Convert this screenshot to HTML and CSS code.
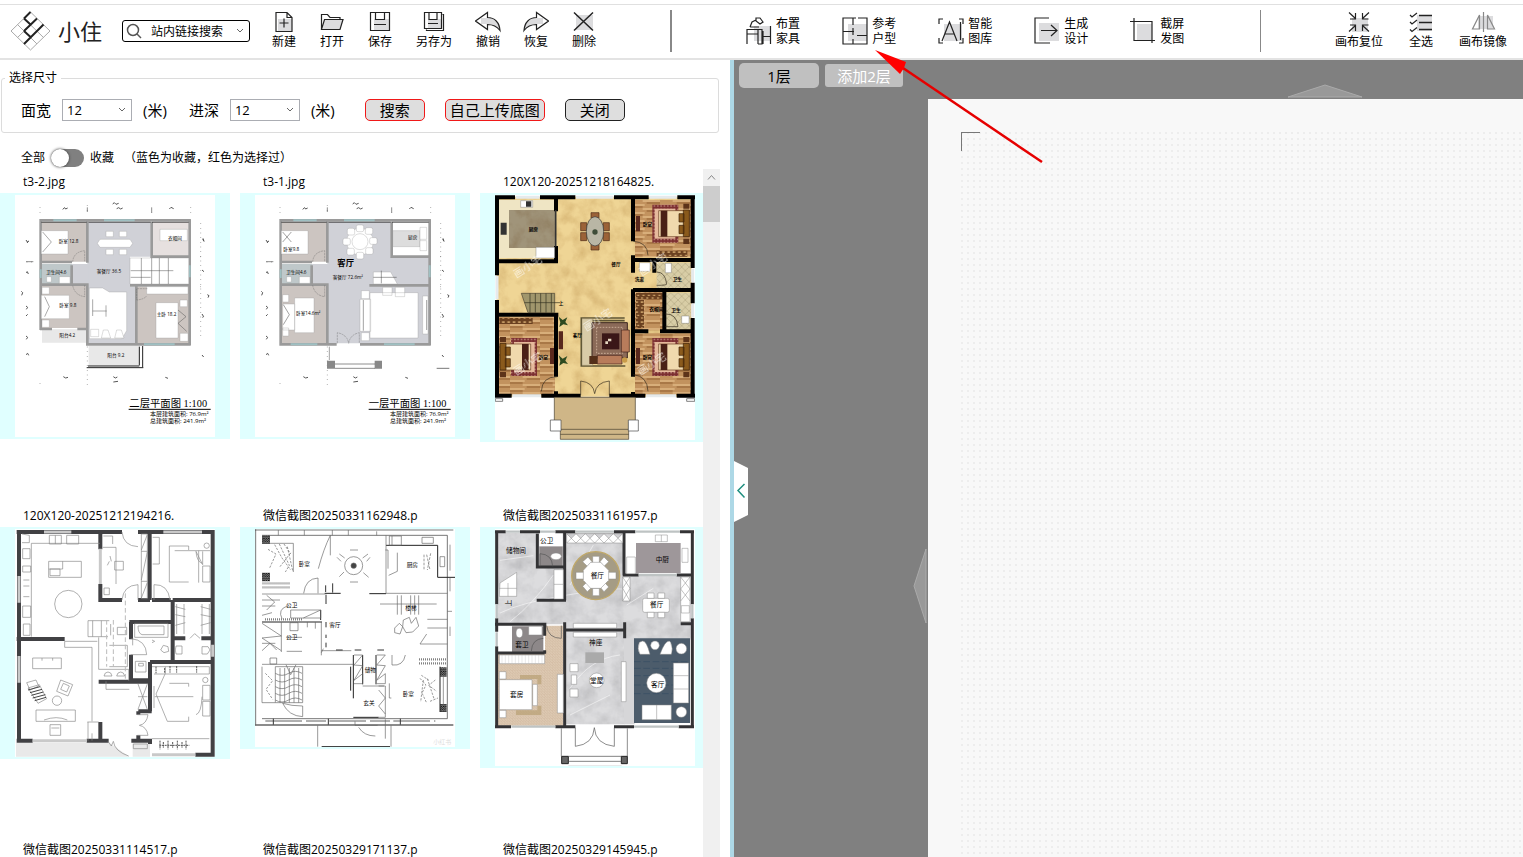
FILE: index.html
```
<!DOCTYPE html>
<html lang="zh-CN">
<head>
  <meta charset="UTF-8" />
  <meta name="viewport" content="width=device-width, initial-scale=1.0"/>
  <title>小住</title>
  <link rel="stylesheet" href="styles.css">
</head>
<body>
  <header class="topbar">
    <div class="logo">
      <svg class="logo-mark" viewBox="0 0 41 40">
        <g fill="none" stroke="#aaa" stroke-width="1">
          <path d="M20.500 1L40 20L20.500 39L1 20ZM14 7.500L33.500 26.500M7.500 13.500L27 33M27 7.500L7.500 26.500M33.500 13.500L14 33"/>
        </g>
        <path d="M14 7.500L20.500 1M14 7.500L20.500 13.500M27 7.500L14 20M14 20L20.500 26M33.500 13.500L14 33" fill="none" stroke="#222" stroke-width="2"/>
      </svg>
      <span class="logo-name">小住</span>
    </div>

    <div class="search">
      <svg class="search-icon" viewBox="0 0 16 16"><circle cx="7" cy="7" r="5.500"/><path d="M11 11l4 4"/></svg>
      <select class="search-select" aria-label="站内链接搜索">
        <option>站内链接搜索</option>
      </select>
    </div>

    <nav class="tools">
      <button class="tool">
        <svg viewBox="0 0 26 22"><path class="shade" d="M7 8h14v12H7z"/><path d="M5 1.500h11l5 5v14H5zM16 1.500v5h5M8.500 12h9M13 7.500v9"/></svg>
        <span>新建</span>
      </button>
      <button class="tool">
        <svg viewBox="0 0 26 22"><path class="shade" d="M5 8h19l-3 10H4z"/><path d="M2.500 18.500v-15h6l2.500 3h10v2M2.500 18.500l3-10h18.500l-3 10z"/></svg>
        <span>打开</span>
      </button>
      <button class="tool">
        <svg viewBox="0 0 26 22"><path class="shade" d="M7 8h15v11H7z"/><path d="M3.500 1.500h19v18h-19zM8.500 1.500v7h9v-7M7 13.500h12"/></svg>
        <span>保存</span>
      </button>
      <button class="tool">
        <svg viewBox="0 0 26 22"><path class="shade" d="M7 8h13v10H7z"/><path d="M3.500 1.500h17v16h-17zM8 1.500v7h8v-7M7 12.500h10M21.500 3.500h1v16h-17v-1"/></svg>
        <span>另存为</span>
      </button>
      <button class="tool">
        <svg viewBox="0 0 26 22"><path class="shade" d="M6 7h10l8 6v5l-8-5H6z"/><path d="M.5 10l12-8.500v5c7 0 12 5 12.500 13c-3-4-6-6-12.500-6v5z"/></svg>
        <span>撤销</span>
      </button>
      <button class="tool">
        <svg viewBox="0 0 26 22"><path class="shade" d="M20 7H10l-8 6v5l8-5h10z"/><path d="M25.500 10l-12-8.500v5c-7 0-12 5-12.500 13c3-4 6-6 12.500-6v5z"/></svg>
        <span>恢复</span>
      </button>
      <button class="tool">
        <svg viewBox="0 0 26 22"><path class="shade" d="M5 4h17v15H5z"/><path d="M3 1.500l19 18M22 1.500l-19 18" stroke-width="1.500"/></svg>
        <span>删除</span>
      </button>
    </nav>

    <div class="divider"></div>

    <nav class="features">
      <button class="feature">
        <svg viewBox="0 0 26 28"><path class="shade" d="M8 9h17v15H8z"/><path d="M1 27V12.500h11V27M1 17h11M12 12.500h4V27h-4M17 19.500h7M17 14v13M24.500 9v18M4 10L6 5l4-2M4 10h9M10 1h4l3 4-3 2-4-3z"/></svg>
        <span>布置<br>家具</span>
      </button>
      <button class="feature">
        <svg viewBox="0 0 26 28"><path class="shade" d="M6 7h19v17H6z"/><path d="M16 1h9v26H1V1h13M11 1v7M11 11v7M1 14.500h11M15 18.500h10M11 22v5"/></svg>
        <span>参考<br>户型</span>
      </button>
      <button class="feature">
        <svg viewBox="0 0 26 28"><path class="shade" d="M6 7h18v17H6z"/><path d="M5 2H1v5M21 2h4v5M1 21v5h4M25 21v5h-4M4 24L11.500 5L19 24M7 17h9M22.500 5v18"/></svg>
        <span>智能<br>图库</span>
      </button>
      <button class="feature">
        <svg viewBox="0 0 26 28"><path class="shade" d="M5 6h20v18H5z"/><path d="M15 1H1v25h15M7 13.500h16M17 8l6 5.500l-6 5.500"/></svg>
        <span>生成<br>设计</span>
      </button>
      <button class="feature">
        <svg viewBox="0 0 26 28"><path class="shade" d="M7 7h15v16H7z"/><path d="M0 4.500h22V26M4 1v22.500h21"/></svg>
        <span>截屏<br>发图</span>
      </button>
    </nav>

    <div class="divider thin"></div>

    <nav class="tools view-tools">
      <button class="tool">
        <svg viewBox="0 0 26 22"><path class="shade" d="M6 7h16v14H6z"/><path d="M3 1.500l6.500 6M9.500 2v6H4M23 1.500l-6.500 6M16.500 2v6h6M3 20.500l6.500-6M9.500 20v-6H4M23 20.500l-6.500-6M16.500 20v-6h6"/></svg>
        <span>画布复位</span>
      </button>
      <button class="tool">
        <svg viewBox="0 0 26 22"><path class="shade" d="M9 4h15v16H9z"/><path d="M2 4l2 2 5-4M2 11l2 2 5-4M2 18.500l2 2 5-4"/><path d="M11 4.500h13M11 11.500h13M11 18.500h13" stroke-width="1.500"/></svg>
        <span>全选</span>
      </button>
      <button class="tool muted">
        <svg viewBox="0 0 26 22"><path class="shade" d="M8 5h15v13H8z"/><path d="M9.500 4v14h-7zM17.500 4l7 14h-7zM13.500 1v20"/></svg>
        <span>画布镜像</span>
      </button>
    </nav>
  </header>

  <main class="layout">
    <section class="panel">
      <fieldset class="size-box">
        <legend>选择尺寸</legend>
        <div class="size-item">
          <label for="planWidth">面宽</label>
          <select id="planWidth"><option>12</option></select>
          <span>(米)</span>
        </div>
        <div class="size-item">
          <label for="planDepth">进深</label>
          <select id="planDepth"><option>12</option></select>
          <span>(米)</span>
        </div>
        <div class="size-actions">
          <button class="btn btn-red">搜索</button>
          <button class="btn btn-red btn-wide">自己上传底图</button>
          <button class="btn">关闭</button>
        </div>
      </fieldset>

      <div class="switch-row">
        <span>全部</span>
        <input type="checkbox" class="switch" id="favOnly">
        <label for="favOnly">收藏</label>
        <span class="switch-tip">（蓝色为收藏，红色为选择过）</span>
      </div>

      <div class="gallery-wrap">
        <div class="gallery">
          <!-- shared patterns and furniture -->
          <svg class="defs" aria-hidden="true">
            <defs>
              <pattern id="wood" width="90" height="24" patternUnits="userSpaceOnUse">
                <path fill="#c2925e" d="M0 0h90v24H0z"/>
                <path fill="#a97847" d="M0 0h38v6H0zM50 12h40v6H50z"/>
                <path fill="#d8ae7a" d="M38 6h52v6H38zM0 18h44v6H0z"/>
              </pattern>
              <pattern id="parquet" width="8" height="8" patternUnits="userSpaceOnUse">
                <path fill="#ddc9b2" d="M0 0h8v8H0z"/><path d="M0 0l8 8M0 8l4-4" stroke="#c6ad92"/>
              </pattern>
              <pattern id="tile" width="22" height="22" patternUnits="userSpaceOnUse">
                <path fill="#d8cda6" d="M0 0h22v22H0z"/><path d="M0 0l22 22M22 0L0 22" stroke="#8f8460" fill="none"/>
              </pattern>
              <pattern id="rug" width="10" height="10" patternUnits="userSpaceOnUse">
                <path fill="#7b2d2f" d="M0 0h10v10H0z"/><path d="M2 2h5v4H2z" fill="#c08d80"/>
              </pattern>
              <pattern id="closet" width="16" height="30" patternUnits="userSpaceOnUse">
                <path fill="#6a4020" d="M0 0h16v30H0z"/><path d="M2 4h8v5H2zM7 14h7v4H7zM3 22h6v4H3z" fill="#c49a64"/>
              </pattern>
              <pattern id="speck" width="7" height="7" patternUnits="userSpaceOnUse">
                <path fill="#777" d="M0 0h7v7H0z"/><path d="M0 3h4M4 6h3" stroke="#111" stroke-width="3"/>
              </pattern>
              <filter id="stone" x="0" y="0" width="1" height="1">
                <feTurbulence type="fractalNoise" baseFrequency=".025" numOctaves="4" seed="8"/>
                <feColorMatrix values="0 0 0 0 .65  0 0 0 0 .5  0 0 0 0 .3  .7 .7 0 0 -.55"/>
                <feComposite in2="SourceGraphic" operator="in"/>
                <feBlend in2="SourceGraphic" mode="multiply"/>
              </filter>
              <filter id="marble" x="0" y="0" width="1" height="1">
                <feTurbulence type="fractalNoise" baseFrequency=".02" numOctaves="4" seed="3"/>
                <feColorMatrix values="0 0 0 0 .6  0 0 0 0 .6  0 0 0 0 .61  .9 .9 0 0 -.7"/>
                <feComposite in2="SourceGraphic" operator="in"/>
                <feBlend in2="SourceGraphic" mode="multiply"/>
              </filter>
              <g id="luxBed">
                <path fill="url(#rug)" d="M33 0h78v114H33z"/>
                <path fill="#e6b99c" d="M42 12h62v90H42z"/>
                <path fill="#f0d9ad" stroke="#6a3f22" stroke-width="2" d="M0 18h92v78H0z"/>
                <path fill="#4a2016" d="M66 18h20v78H66z"/>
                <path fill="#8a5a1c" stroke="#3b2008" stroke-width="2" d="M0 16h18v80H0zM16 27h15v25H16zM16 62h15v25H16z"/>
                <path fill="#5d3319" d="M0-3h18v15H0zM0 102h18v16H0z"/>
              </g>
              <g id="dims" fill="none" stroke="#555" stroke-width="2">
                <path d="M120 52v20M262 46v22M455 52v20M572 52v20M602 100v350M80 216h20M600 200h12M600 290h12M120 580v14M262 470v120" stroke-dasharray="2 12"/>
                <path d="M78 215h22M262 52v14M455 54v14"/>
                <path d="M188 58l6-5l3 4l6-3M338 42l5-4l5 5l8-3M350 56l6-3l6 4l6-3M508 57l5-5l8 4M78 150l4 6l4-3l-5 6M78 248l4-3l3 7M64 304l4 4l-3 8M78 348l5 4l-4 6M78 378l5-5M608 148l4 6l-3-9M606 240l6 5M622 314l5 3l-3 6M606 372l5 8l-4 2M606 495l5 6M190 560l7 4l7-2M340 560l6 4l6-3M340 576l14-2M496 562l8 3M78 438l5 4l-4 6M78 494l5-4l3 6" stroke-width="3"/>
              </g>
              <g id="planTitle">
                <path d="M386 658h246" stroke="#000" stroke-width="3"/>
                <text x="450" y="679" font-size="18">本层建筑面积: 76.9m²</text>
                <text x="450" y="698" font-size="18">总建筑面积: 241.9m²</text>
              </g>
              <g id="chair"><rect x="-11" y="-11" width="22" height="20" rx="5"/></g>
            </defs>
          </svg>

          <article class="card">
            <h3>t3-2.jpg</h3>
            <div class="thumb">
              <svg class="plan" viewBox="45 15 600 726">
                <path fill="#fff" d="M45 15h600v726H45z"/>
                <use href="#dims"/>
                <path fill="#d0d1d7" d="M262 95h190v105h-62v90h18v170H262z"/>
                <path fill="#d0d1d7" d="M215 222h50v64h-50z"/>
                <path fill="#ccc5c1" d="M122 95h138v120H122zM122 288h138v126H122zM410 290h158v170H410z"/>
                <path fill="#e6e0df" d="M456 96h110v102H456z"/>
                <path fill="#bfc8ca" d="M124 222h92v62h-92z"/>
                <path fill="#e8e8e8" d="M126 418h132v40H126zM266 468h154v60H266z"/>
                <path d="M118 91h454M122 88v332M122 216h94M122 284h144M262 92v126M262 282v184M258 463h314M569 88v378M390 286h180M455 96v104h114M409 290v172M120 417h36M232 417h28M215 226v58" fill="none" stroke="#9a9a9a" stroke-width="8"/>
                <path d="M124 97h136M266 97h186M456 97h110" stroke="#222" stroke-width="2"/>
                <path d="M160 91h70M312 91h92M432 463h92M122 238v26M569 226v36" stroke="#9fc0c2" stroke-width="6"/>
                <g fill="#fff" stroke="#999" stroke-width="1">
                  <path d="M124 122h80v70h-80zM124 316h84v70h-84zM468 338h66v106h-66zM390 204h176v78H390zM440 290h124v22H440zM178 260h32v20h-32zM268 294h40l20 12h52v116l-14 24h-98z"/>
                  <path d="M300 148h90l8 12l-8 12h-90l-8-12zM318 124h22v16h-22zM358 124h22v16h-22zM318 178h22v16h-22zM358 178h22v16h-22zM126 292h22v20h-22zM126 390h22v22h-22zM540 430h24v24h-24zM540 330h22v20h-22zM480 118h82v34h-82z"/>
                  <path d="M272 418h24v22h-24zM304 444l6-24h14l8 24zM344 444l6-24h14l8 24zM140 260h14v16h-14z"/>
                </g>
                <path d="M424 204v78M455 204v78M478 204v78M505 204v78M392 242h128M392 262h60M278 328v50M278 363h42M318 346v34M128 126l26 30l-26 30M134 320l14 30l-14 30M534 360l24 20l-24 20l26 24" fill="none" stroke="#555" stroke-width="1.500"/>
                <path d="M254 214v-32q-34 4-36 34M254 286v34q-30-4-36-34M442 296h-32v34q22-2 30-12" fill="none" stroke="#555" stroke-dasharray="6 2"/>
                <path d="M264 528h154M428 468v64M418 470v56M260 533h170" fill="none" stroke="#222" stroke-width="3"/>
                <g font-size="14"><text x="176" y="160">卧室 12.8</text><text x="290" y="250">客餐厅 36.5</text><text x="138" y="252">卫生间4.6</text><text x="178" y="352">卧室 9.8</text><text x="470" y="378">主卧 18.2</text><text x="178" y="440">阳台4.2</text><text x="322" y="500">阳台 9.2</text><text x="504" y="150">衣帽间</text></g>
                <text x="388" y="651" font-size="31" class="serif">二层平面图 1:100</text>
                <use href="#planTitle"/>
              </svg>
            </div>
          </article>

          <article class="card">
            <h3>t3-1.jpg</h3>
            <div class="thumb">
              <svg class="plan" viewBox="45 15 600 726">
                <path fill="#fff" d="M45 15h600v726H45z"/>
                <use href="#dims"/>
                <path fill="#d0d1d7" d="M262 95h190v105h116v260H262zM215 222h50v64h-50z"/>
                <path fill="#ccc5c1" d="M122 95h138v120H122zM122 288h138v172H122z"/>
                <path fill="#bfc8ca" d="M124 222h92v62h-92z"/>
                <path fill="#fff" d="M458 98h108v98H458z"/>
                <path fill="#ddd" stroke="#999" d="M458 122h82v48h-82z"/>
                <path d="M118 91h454M122 88v378M122 216h94M122 284h144M262 92v126M262 282v184M118 463h172M360 463h212M569 88v378M388 286h182M455 96v104h114M215 226v58" fill="none" stroke="#9a9a9a" stroke-width="8"/>
                <path d="M124 97h136M266 97h186M456 97h110" stroke="#222" stroke-width="2"/>
                <path d="M160 91h70M312 91h92M432 463h92M152 463h80M122 238v26M569 226v36" stroke="#9fc0c2" stroke-width="6"/>
                <g fill="#fff" stroke="#999">
                  <path d="M124 122h80v70h-80zM164 324h58v104h-58zM128 342h36v78h-36zM128 314h18v22h-18zM128 414h18v24h-18zM178 260h32v20h-32zM140 260h14v16h-14zM390 308h144v136H390zM360 328h32v96h-32zM428 292h28v24h-28zM466 292h28v28h-28zM364 302h24v24h-24zM364 428h24v24h-24zM548 318h16v114h-16zM400 282v-36h52l20 36zM540 112h20v36h-20zM540 152h20v30h-20z"/>
                </g>
                <g fill="#fff" stroke="#999"><circle cx="360" cy="155" r="40"/><circle cx="360" cy="155" r="24"/>
                  <use href="#chair" x="360" y="116"/><use href="#chair" x="387" y="124"/><use href="#chair" x="400" y="154"/><use href="#chair" x="388" y="184"/><use href="#chair" x="360" y="198"/><use href="#chair" x="332" y="186"/><use href="#chair" x="320" y="156"/><use href="#chair" x="333" y="126"/></g>
                <path d="M128 126l26 30M154 126l-26 30M130 344l18 30l-18 30M400 262h70M424 242v38M370 330v92M560 330v90M268 470v40" fill="none" stroke="#444" stroke-width="1.500"/>
                <path d="M254 214v-32q-34 4-36 34M254 286v34q-30-4-36-34M292 460v-32q30 6 34 32q4-26 32-32v32" fill="none" stroke="#555" stroke-dasharray="7 2"/>
                <path fill="#888" d="M261 512h24v24h-24zM404 512h22v24h-22z"/><path d="M285 522h120M285 535h120" stroke="#555" stroke-width="2"/>
                <path d="M590 535h38" stroke="#333" stroke-width="2"/>
                <text x="292" y="229" font-size="25" font-weight="bold">客厅</text>
                <g font-size="14"><text x="278" y="266">客餐厅 72.6m²</text><text x="130" y="184">卧室9.8</text><text x="138" y="252">卫生间4.6</text><text x="168" y="374">卧室14.6m²</text><text x="504" y="148">厨房</text></g>
                <text x="386" y="651" font-size="31" class="serif">一层平面图 1:100</text>
                <use href="#planTitle"/>
              </svg>
            </div>
          </article>

          <article class="card">
            <h3>120X120-20251218164825.</h3>
            <div class="thumb">
              <svg class="plan" viewBox="45 15 600 735">
                <path fill="#fff" d="M45 15h600v735H45z"/>
                <path fill="#efd595" filter="url(#stone)" d="M50 20h585v600H50z"/>
                <path fill="url(#wood)" d="M465 30h168v172H465zM57 380h168v234H57zM465 430h168v184H465zM465 306h86v115h-86z"/>
                <path fill="#efe5c4" d="M57 30h165v174H57z"/><path fill="#a0947a" filter="url(#stone)" d="M87 60h140v114H87z"/>
                <path fill="url(#tile)" d="M530 218h102v76H530zM556 308h76v110h-76z"/>
                <path fill="url(#closet)" d="M530 182h92v18h-92zM468 308h80v20h-80zM468 330h24v84h-24zM58 384h100v18H58z"/>
                <path d="M45 22h60M180 22h106M402 22h104M592 22h53M51 16v240M51 330v292M638 16v218M638 278v62M638 384v238M228 22v42M228 168v46H51M51 374h184M228 374v186M228 604v18M459 22v132M459 196v52M459 300h180M459 298v262M459 606v14M459 210h180M523 212v36M553 304v114M465 424h40M540 424h98M45 617h50M184 617h118M388 617h108M590 617h55" fill="none" stroke="#000" stroke-width="12"/>
                <path d="M107 22h72M288 22h112M508 22h82M97 617h86M498 617h90M51 258v70M638 236v40M638 342v40" fill="none" stroke="#e5eaec" stroke-width="9"/>
                <path d="M227 60v110" stroke="#333" stroke-width="5"/>
                <g fill="#fff" stroke="#555"><path d="M168 172h56v32h-56zM122 32h36v20h-36zM478 218h32v26h-32zM556 220h18v28h-18zM605 378h22v22h-22z"/></g>
                <path fill="#333" d="M62 98h18v36H62zM138 34h16v16h-16z"/>
                <use href="#luxBed" transform="translate(60 444)"/>
                <use href="#luxBed" transform="matrix(-1 0 0 1 628 44)"/>
                <use href="#luxBed" transform="matrix(-1 0 0 1 628 444)"/>
                <path fill="#59281d" d="M210 474h12v48h-12zM468 474h12v48h-12zM468 78h12v46h-12zM236 424h13v54h-13z"/>
                <g fill="#9b6238" stroke="#4b2b16" stroke-width="2"><path d="M333 68h24v16h-24zM333 162h24v18h-24zM302 98h18v24h-18zM302 128h18v24h-18zM370 98h18v24h-18zM370 128h18v24h-18z"/></g>
                <ellipse cx="345" cy="124" rx="26" ry="44" fill="#b9b6a5" stroke="#333" stroke-width="2"/><circle cx="345" cy="126" r="8" fill="#3e4c38"/>
                <path fill="#a0966c" stroke="#4a4330" stroke-width="2" d="M124 310h100v58h-80z"/>
                <path d="M150 310v58M166 310v58M182 310v58M198 310v58M214 310v58M134 338h106" stroke="#30301f" stroke-width="2" fill="none"/>
                <path fill="none" stroke="#5d5434" stroke-width="5" d="M434 384H304v144h132M434 392H312v128"/>
                <path fill="#d8cba7" stroke="#756a4b" d="M306 386h32v140h-32z"/>
                <path fill="#8b6a58" stroke="#3b261f" stroke-width="3" d="M336 398h106v106H336z"/>
                <path fill="none" stroke="#c8aa94" stroke-width="3" stroke-dasharray="5 4" d="M350 412h78v78h-78z"/>
                <path fill="#3a1717" d="M366 430h52v48h-52z"/><path fill="#e4d6bf" d="M384 446h10v8h-10zM376 454h8v8h-8z"/>
                <path fill="#b87c5b" stroke="#40201a" stroke-width="2" d="M352 496h74v26h-74zM424 420h24v66h-24z"/><path fill="#542f19" d="M328 498h24v24h-24z"/><circle cx="434" cy="510" r="8" fill="#c89b49"/>
                <g fill="#2e4a20"><path d="M236 380l12 10l14-8l-6 14l8 10l-14-3l-12 8l3-14zM236 496l12 10l14-8l-6 14l8 10l-14-3l-12 8l3-14z"/></g>
                <path d="M184 604q2-44 48-44M504 604q-2-46-44-50M504 196q-2-40-44-42M302 615v-42q38 4 42 38q4-34 44-38v42M530 286q32 0 30-4q-4-36-30-36M556 410h38q-4-40-38-38" fill="none" stroke="#332b1c" stroke-width="2"/>
                <path fill="#cfb687" stroke="#443c2d" stroke-width="2" d="M223 622h243v74h-20v52H241v-52h-18z"/><path d="M241 718h205M241 733h205" stroke="#443c2d" stroke-width="2"/>
                <path fill="#fff" stroke="#444" stroke-width="2" d="M211 690h32v33h-32zM445 690h30v33h-30zM46 626h22v8H46zM620 626h24v8h-24z"/>
                <g font-size="14" font-weight="bold"><text x="146" y="122">厨房</text><text x="394" y="228">餐厅</text><text x="488" y="108">卧室</text><text x="464" y="274">洗漱</text><text x="578" y="272">卫生</text><text x="574" y="365">卫生</text><text x="508" y="362">衣帽间</text><text x="278" y="440">客厅</text><text x="176" y="508">卧室</text><text x="488" y="508">卧室</text><text x="236" y="346">上</text></g>
                <g font-size="32" fill="#fff" opacity=".65"><text transform="translate(108 264) rotate(-32)">画小宅</text><text transform="translate(484 258) rotate(-32)">画小宅</text><text transform="translate(318 424) rotate(-32)">画小宅</text><text transform="translate(108 556) rotate(-32)">画小宅</text><text transform="translate(480 556) rotate(-32)">画小宅</text></g>
              </svg>
            </div>
          </article>

          <article class="card">
            <h3>120X120-20251212194216.</h3>
            <div class="thumb">
              <svg class="plan" viewBox="45 87 600 684">
                <path fill="#fff" d="M45 87h600v684H45z"/><path fill="#e9e9e9" d="M48 728h280l60 42H48zM398 730h52v40h-52z"/>
                <path d="M50 96h316M414 96h230M57 90v636M301 96v52M301 252v54M296 300h70M414 300h36M449 96v204M456 300h56M518 300v186M518 300h124M638 90v680M50 417h144M388 366h132M393 366v52M393 464v78M388 541h68M296 545h160M450 486v148M450 486h194M518 415h38M604 415h38M415 634h40M415 634v10M415 706v12M50 722h48M260 722h66M301 666v56M394 722h62M450 722v10M586 764h58" fill="none" stroke="#414144" stroke-width="12"/>
                <path d="M132 96h82M490 96h116M98 722h162M57 228v80M57 468v80M301 146v106M638 434v36M456 764h130" fill="none" stroke="#c9c9c9" stroke-width="9"/>
                <g fill="none" stroke="#888" stroke-width="2">
                  <circle cx="205" cy="312" r="41"/><circle cx="171" cy="602" r="14"/><circle cx="620" cy="137" r="8"/><circle cx="616" cy="540" r="8"/>
                  <path d="M146 184h98v48h-98zM146 207h42v-23M150 207h30v20h-30zM148 106h36v26h-36zM166 106v26M200 106h36v26h-36zM66 102l22 4v22H66M94 130v280M94 130h206M68 146h22v30H68zM68 198h24v18H68zM68 318h24v34H68zM70 240h18M70 258h18M70 290h18M70 372h20v34H70z"/>
                  <path d="M310 108h28v24M308 142h40v110M344 184h26v26h-26zM322 196l6-12M330 168l4 16M312 264h16v20h-16zM424 102h18v194h-18zM424 150l18-46M424 240l18-84M424 294l18-46M458 112h20v80h-20M424 154h18M424 244h18"/>
                  <path d="M508 138h58v12M524 152h106M596 152v96M608 198h22v48h-22zM608 154v40l-20-40M606 190q-16-6-18-36M508 138v108h58"/>
                  <path d="M530 312v90M552 312v90M606 312v90M628 312v90M526 320l30 8M526 344l30 6M526 376l30-8M602 320l30 8M602 344l30 6M602 376l30-8" />
                  <path d="M404 370h100v42H404zM414 378h78v26H426q-12-4-12-26M398 416v20M406 484h32v32h-32zM416 490h14v8h-14zM490 436l14 4l2 14l-14 4l-10-8zM528 438h18v24h-18l-2-12zM606 440h18l6 10l-8 12h-16zM456 420l8 4l-8 4"/>
                  <path d="M264 362h64M264 362v48M278 362v48M304 362v48M264 410h60M194 424v18h82v222M194 424h98M276 700v22M296 412v96h90v34M264 666v56M296 666h-34M332 372v34M352 382h28v22h-28zM328 436h54v64h-54M312 528q2-12 12-12t12 12zM350 528q2-12 12-12t12 12z"/>
                  <path d="M98 474h86v32H98zM126 474v8M158 474v8M80 548l28-8l8 18l-26 12zM84 564l34-10l22 42l-26 14zM182 540l36 14l-14 34l-34-14zM190 550l18 8l-8 18l-18-8zM108 630h118v34H108zM132 660q38-14 70 0M150 674h32v32h-32zM154 684h24"/>
                  <path d="M318 544v24h70M414 552l28 76M442 552l-28 76M414 590h28M462 558v66M496 500v20l-28 62l34 82M508 550h58v10M502 664h64v-14M464 590h116M608 556h22v44h-22zM608 604h22v44h-22zM606 590q-2 50-18 54M456 500h172v22H462"/>
                  <path d="M366 96q4 42 48 44M366 300q4-44 48-46V300M462 300v-46q42-2 48 46M392 464h48q-2-44-46-48M412 644h32q-4 28-26 32q22 4 26 30h-32M324 724l10 14l6-14q4 30 46 44M570 415l14-14l16 14M456 716h172M400 732h42v14h-42z"/>
                </g>
                <path d="M480 722v26M490 726v18M504 722v26M518 726v18M532 722v26M546 726v18M558 722v26M468 500v20M494 504v14M510 498v20M530 498v20M590 498v20M478 736h90" stroke="#555" stroke-width="3" stroke-dasharray="6 2"/>
                <path d="M84 570l36-10M90 578l36-10M94 586l36-10M98 594l38-10M104 602l34-10" stroke="#444" stroke-width="3"/>
                <path d="M320 360v140M340 360v140M376 280v260" stroke="#bbb" stroke-width="3" stroke-dasharray="14 8"/>
              </svg>
            </div>
          </article>

          <article class="card">
            <h3>微信截图20250331162948.p</h3>
            <div class="thumb">
              <svg class="plan" viewBox="45 87 600 654">
                <path fill="#fff" d="M45 87h600v654H45z"/>
                <path d="M47 88v588M45 90h595M66 106h556M622 106v550M66 656h556" fill="none" stroke="#333" stroke-width="2"/>
                <path d="M45 675h595" stroke="#666" stroke-width="4"/><path d="M76 663h510" stroke="#111" stroke-width="2" stroke-dasharray="110 12 60 10"/>
                <path fill="url(#speck)" d="M66 106h24v26H66zM66 218h24v26H66zM600 502h20v28h-20zM600 612h20v24h-20z"/>
                <path d="M66 366h180M242 330v30M254 280h48M388 281h50M340 465v130M368 465v88M408 465v88M438 136h155v96h52M340 652h76M245 740h205M332 500v72M600 500v136" fill="none" stroke="#222" stroke-width="3"/>
                <g fill="none" stroke="#666" stroke-width="2">
                  <path d="M66 493h274M115 90v16M193 90v16M277 90v16M325 90v16M410 94v12M66 130h94v86M271 106v60M271 106q-20 40-36 100M66 282h190M438 106v174h184M436 150h8v56M448 108h36v28h-36zM456 108v28M546 112h34v18h-34zM600 170h14v30h-14z"/>
                  <circle cx="341" cy="197" r="27"/><circle cx="341" cy="197" r="8" fill="#444"/><path d="M330 150h24M330 246h24M298 162l16 12M384 162l-16 12M298 230l14-14M386 232l-16-14M291 172l12 12M390 172l-10 12"/>
                  <path d="M234 280v-46q-38 2-43 46M472 286v58M484 286v58M512 286v58M524 286v58M536 286v58M420 312h170M562 358h60M562 384h60M540 432h82M540 432l20-30M622 334h14M630 234v40M630 134v78M630 380v28"/>
                  <path d="M106 500h82v108h-82zM106 520q20 12 40 0t40 0M106 540q20 12 40 0t40 0M106 560q20 12 40 0t40 0M106 580q20 12 40 0t40 0M106 600q20 12 40 0t40 0M120 504v104M134 504v104M148 504v104M162 504v104M176 504v104M138 494l14 30l16-30M66 500v108h40M244 452h90M250 446l-6 12M244 366v100"/>
                  <path d="M152 330h90v24h-90zM190 354l52-24M80 286l24 20l-24 24M66 346l30-8M124 366v90M66 370l58 38l-58 6l58 38M66 452l24-22l20 20M150 368h24v24h-24zM140 454h46M140 412h46M202 366v16M226 366v20M142 318q-30 10-16 38M66 300h54M66 318h40M66 430h40M90 474h20v18h-20z"/>
                  <path d="M342 465h26l-26 30l26 2l-26 44l26-20v30h-26M410 465h26l-26 30l26 2l-26 44l26-20v30h-26M368 558h64M416 558h20v94h-20M416 570l20 24l-20 24l20 24M456 495q34 4 40-30M456 465v30M448 550v44h6M610 530v86"/>
                  <path d="M464 384l14-14l10 10l-8 22l-16-4zM490 360l18-8l6 18l14-18l8 26l-18 18l-20 2l-10-18zM446 226l26-12v-56"/><path d="M552 164v48M560 164l10 46M572 160l-10 50" stroke-dasharray="8 4"/>
                  <path stroke-dasharray="7 4" d="M540 535l18 20l-12 24l14 30M544 526l22 14M586 540l-20 16l24 18M570 604l24-10M84 148l24 14l-20 44M118 132l30 64l-12 20M142 140l16 72M120 200l34-44M104 134l22 40l26 36M132 132l20 30M76 520l22 22l-20 26l20 30M550 540l-8 66M562 536l20 60"/>
                  <path d="M128 610q18 38 60 40M128 610q26 8 60 8v32M233 676v64M453 676v64M345 664v12h68M356 682q16 26 50 26M436 658v58"/>
                </g>
                <path d="M68 250h80M68 262h80M538 478h82M538 490h82M76 358h110" stroke="#444" stroke-width="7" stroke-dasharray="2 4"/>
                <path d="M100 656v18M265 656v18M481 656v18M258 284v28M258 366v16M258 404v10M258 428v14M288 450h20M344 450h20M412 450h20M278 250v28M257 256v20" stroke="#333" stroke-width="3"/>
                <g font-size="17"><text x="176" y="199">卧室</text><text x="500" y="202">厨房</text><text x="268" y="380">客厅</text><text x="138" y="320">公卫</text><text x="138" y="418">公卫</text><text x="374" y="516">储物</text><text x="370" y="616">玄关</text><text x="488" y="588">卧室</text><text x="496" y="330">楼梯</text></g>
                <text x="580" y="732" font-size="18" fill="#ddd">小红书</text>
              </svg>
            </div>
          </article>

          <article class="card">
            <h3>微信截图20250331161957.p</h3>
            <div class="thumb">
              <svg class="plan" viewBox="45 222 600 711">
                <path fill="#fff" d="M45 222h600v711H45z"/>
                <path fill="#dcdcde" filter="url(#marble)" d="M52 234h382v574H258V508H52zM432 360h200v194H432z"/>
                <path fill="#d6d6d8" d="M432 550h32v258h-32z"/>
                <path fill="url(#parquet)" d="M195 512h54v300H54V598h141z"/>
                <path fill="#8d8889" d="M178 274h70v60h-70zM96 514h94v78H96z"/><path fill="#fff" d="M178 234h70v40h-70zM57 514h38v78H57zM438 234h194v122H438z"/>
                <path fill="#9e979a" d="M468 264h134v90H468z"/>
                <path fill="#4c5c6b" d="M462 550h168v254H462z"/><path d="M462 620h168M462 640h168M462 662h168M462 690h168M462 716h168" stroke="#3d5265" stroke-width="3" stroke-dasharray="20 8"/>
                <path d="M60 474q60-30 190-52t180-20M60 316l100-14M90 500q70-54 130-140M270 390l70-120M270 700q60-90 150-100M270 780l120-60M440 450l80-50" fill="none" stroke="#fff" stroke-width="3" opacity=".5"/>
                <path d="M45 230h32M120 230h60M226 230h60M402 230h64M600 230h42M50 226v222M50 490v40M50 574v246M637 226v222M637 490v330M172 236v100h80M254 230v206M170 436h88M254 502v318M45 508h154M50 594h144M194 508v34M194 586v10M432 234v126M428 360h48M590 360h48M434 502v48M254 525h180M602 506h38M45 815h48M226 815h60M402 815h60M596 815h46" fill="none" stroke="#333335" stroke-width="9"/>
                <path d="M78 230h42M180 230h46M286 230h116M466 230h134M94 815h132M462 815h134M50 448v42M50 532v42M637 448v42M476 360h114" stroke="#bec3c3" stroke-width="7"/>
                <g fill="#fff" stroke="#888" stroke-width="1.500">
                  <path d="M260 236h168v28H260zM260 264l28-28l28 28l28-28l28 28l28-28l28 28M260 236l28 28l28-28l28 28l28-28l28 28l28-28"/>
                  <path d="M428 366h22v72h-22zM222 344h28v88h-28zM222 388h28M60 384l50-32v72H58zM84 384v40M58 400h52M526 240h36v20h-36zM544 240v20M606 280h18v42h-18zM440 306h26v50h-26zM602 366h28v134h-28z"/>
                  <path fill="none" d="M428 366l22 34l-22 38M450 366l-22 34l22 38M602 366l28 36l-28 36M630 366l-28 36l28 36"/>
                  <circle cx="347" cy="362" r="72" fill="#a59c85" stroke="#c0a868" stroke-width="4"/>
                  <path d="M338 304h20v24h-20zM338 400h20v22h-20zM288 352h24v20h-24zM384 352h24v20h-24zM308 320l16-14l12 14l-14 14zM372 306l14 14l-14 14l-12-14zM308 394l14-14l14 16l-14 14zM372 410l14-14l-14-16l-12 16z"/><path d="M332 322h30l24 24v30l-24 24h-30l-22-24v-30z"/>
                  <rect x="488" y="430" width="80" height="42" rx="6"/><path d="M502 414h20v16h-20zM534 414h20v16h-20zM502 472h20v16h-20zM534 472h20v16h-20z"/>
                  <path d="M280 505h130v14H280zM280 532h130v14H280zM270 626h24v24h-24zM274 660h16v28h-16zM270 702h24v24h-24zM424 620h14v120h-14zM58 600h136v26H58zM58 674h98v90H58zM158 688h14v64h-14zM58 650h20v22H58zM58 766h20v22H58zM232 658h18v116h-18zM146 514h40v26h-40zM604 452h24v22h-24z"/>
                  <path d="M478 562q-8 20 2 36h30q-10-40-22-40zM572 562q8 20 2 36h-34q14-40 28-40zM580 624h46v120h-46zM580 662h46M580 702h46M486 750h88v44h-88zM530 750v44"/>
                  <circle cx="525" cy="571" r="13"/><circle cx="604" cy="581" r="16"/><circle cx="604" cy="771" r="16"/><circle cx="529" cy="684" r="29"/><circle cx="350" cy="676" r="22"/><ellipse cx="228" cy="304" rx="16" ry="10"/><ellipse cx="118" cy="534" rx="10" ry="14"/>
                </g>
                <path fill="#b8a074" d="M120 660h64v28h-12v-16h-52zM108 766h64v-14h12v28h-76z" opacity=".7"/>
                <path fill="#aaa" d="M316 592h56v32h-56z"/>
                <path d="M66 600v26M76 600v26M86 600v26M96 600v26M106 600v26M116 600v26M126 600v26M136 600v26M146 600v26M156 600v26M166 600v26M176 600v26M186 600v26" stroke="#bbb"/>
                <path d="M286 818v56q54-6 57-56q3 50 60 56v-56M154 588q2-36 36-38M180 334v-38q36 2 38 38M200 512q4 38 44 38v-38M244 820v84M442 820v84" fill="none" stroke="#555" stroke-width="2"/>
                <path fill="#666" stroke="#222" stroke-width="3" d="M245 904h20v22h-20zM424 904h18v22h-18z"/><path d="M265 904h160M265 919h160M265 934h160" stroke="#444" stroke-width="2"/>
                <g font-size="20"><text x="78" y="294">储物间</text><text x="180" y="265">公卫</text><text x="527" y="320">中厨</text><text x="332" y="368">餐厅</text><text x="510" y="455">餐厅</text><text x="106" y="576">套卫</text><text x="327" y="571">神座</text><text x="330" y="685">堂屋</text><text x="513" y="696">客厅</text><text x="90" y="726">套房</text><text transform="translate(78 454) rotate(-90)" x="0" y="14">上</text></g>
              </svg>
            </div>
          </article>

          <article class="card"><h3>微信截图20250331114517.p</h3></article>
          <article class="card"><h3>微信截图20250329171137.p</h3></article>
          <article class="card"><h3>微信截图20250329145945.p</h3></article>
        </div>

        <div class="scrollbar" aria-hidden="true">
          <svg class="scroll-up" viewBox="0 0 17 17"><path d="M5 10.500l3.500-4l3.500 4"/></svg>
          <div class="scroll-thumb"></div>
        </div>
      </div>
    </section>

    <section class="workspace">
      <div class="floors">
        <button class="floor">1层</button>
        <button class="floor floor-add">添加2层</button>
      </div>
      <div class="paper">
        <div class="sheet"></div>
      </div>
      <button class="collapse" aria-label="收起">
        <svg viewBox="0 0 14 61"><path d="M10.500 23L4 29.500l6.500 7"/></svg>
      </button>
      <svg class="pan pan-up" viewBox="0 0 76 14"><path d="M1 13L38 1L75 13Z"/></svg>
      <svg class="pan pan-left" viewBox="0 0 14 76"><path d="M13 1L1 38L13 75Z"/></svg>
    </section>
  </main>

  <!-- red pointer to the reference plans button -->
  <svg class="pointer" viewBox="0 0 170 115">
    <path class="pointer-line" d="M28 18L167 112"/>
    <path class="pointer-head" d="M0 0L31 12L29 18L25 24Z"/>
  </svg>
</body>
</html>
```
FILE: styles.css
```
* {
  box-sizing: border-box;
}

body {
  display: flex;
  flex-direction: column;
  position: relative;
  height: 100vh;
  margin: 0;
  overflow: hidden;
  background: #fff;
  color: #000;
  font-family: "Open Sans", "Noto Sans CJK SC", sans-serif;
  font-size: 12px;
  line-height: 16px;
}

button,
select,
input {
  margin: 0;
  color: inherit;
  font-family: inherit;
}

button {
  padding: 0;
  border: 0;
  background: none;
  cursor: pointer;
}

/* top bar */
.topbar {
  display: flex;
  flex: none;
  align-items: center;
  height: 60px;
  padding: 4px 16px 0 10px;
  border-bottom: 2px solid #e3e3e3;
  background: linear-gradient(#e0e0e0, #e0e0e0) 0 4px / 100% 1px no-repeat;
  white-space: nowrap;
}

.logo {
  display: flex;
  align-items: center;
  gap: 7px;
  width: 112px;
}

.logo-mark {
  width: 41px;
  height: 40px;
}

.logo-name {
  color: #222;
  font-size: 22px;
  line-height: 32px;
}

.search {
  position: relative;
  width: 128px;
}

.search-icon {
  position: absolute;
  top: 3px;
  left: 4px;
  width: 16px;
  height: 16px;
  fill: none;
  stroke: #555;
  stroke-width: 1.5;
  pointer-events: none;
}

select {
  appearance: none;
  border-radius: 0;
  background: #fff url("data:image/svg+xml,%3Csvg xmlns='http://www.w3.org/2000/svg' width='8' height='6'%3E%3Cpath d='M1 1l3 3 3-3' fill='none' stroke='%23666'/%3E%3C/svg%3E") right 5px center no-repeat;
}

.search-select {
  display: block;
  width: 100%;
  height: 22px;
  padding: 0 16px 0 28px;
  border: 1px solid #000;
  border-radius: 3px;
  font-size: 12px;
}

.tools {
  display: flex;
  gap: 24px;
  margin-left: 22px;
}

.tool {
  display: flex;
  flex-direction: column;
  align-items: center;
  font-size: 12px;
  line-height: 18px;
}

.tool svg {
  width: 26px;
  height: 22px;
  margin: 0 -1px;
}

.tool svg,
.feature svg {
  fill: none;
  stroke: #222;
  stroke-width: 1.2;
}

.tool .shade,
.feature .shade {
  fill: #dcdcde;
  stroke: none;
}

.muted svg {
  stroke: #888;
}

.divider {
  width: 2px;
  height: 42px;
  margin-left: 74px;
  background: #888;
}

.features {
  display: flex;
  gap: 42px;
  margin-left: 74px;
}

.feature {
  display: flex;
  align-items: center;
  gap: 4px;
  font-size: 12px;
  line-height: 15px;
}

.feature svg {
  width: 26px;
  height: 28px;
}

.thin {
  width: 1px;
  margin-left: 76px;
}

.view-tools {
  gap: 26px;
  margin-left: auto;
}

/* left panel */
.layout {
  display: flex;
  flex: 1;
  min-height: 0;
}

.panel {
  display: flex;
  flex: 0 0 734px;
  flex-direction: column;
  min-width: 0;
  padding-top: 10px;
  border-right: 4px solid #add8e6;
}

.size-box {
  display: flex;
  align-items: center;
  min-width: 0;
  margin: 0 11px 0 1px;
  padding: 13px 20px 11px 19px;
  border: 1px solid #dcdcdc;
  border-radius: 3px;
  font-size: 15px;
  line-height: 22px;
}

.size-box legend {
  padding: 0 4px;
  margin-left: -16px;
  font-size: 12px;
  line-height: 16px;
}

.size-item {
  display: flex;
  align-items: center;
  gap: 11px;
  margin-right: 22px;
}

.size-item select {
  width: 70px;
  height: 22px;
  padding: 0 4px;
  border: 1px solid #abadb3;
  font-size: 13px;
}

.size-actions {
  display: flex;
  gap: 20px;
  margin-left: 8px;
}

.btn {
  width: 60px;
  height: 22px;
  border: 1px solid #222;
  border-radius: 5px;
  background: #dedede;
  font-size: 15px;
  line-height: 20px;
  white-space: nowrap;
}

.btn-red {
  border-color: #f01818;
}

.btn-wide {
  width: 100px;
}

.switch-row {
  display: flex;
  align-items: center;
  gap: 6px;
  height: 36px;
  padding: 13px 21px 0;
}

.switch {
  appearance: none;
  width: 33px;
  height: 18px;
  border-radius: 9px;
  background: #808080;
  cursor: pointer;
}

.switch::before {
  content: "";
  display: block;
  width: 18px;
  height: 18px;
  border-radius: 50%;
  background: #fff;
  box-shadow: 0 0 3px #333;
}

.switch:checked::before {
  margin-left: 15px;
}

.switch-tip {
  margin-left: 4px;
}

.gallery-wrap {
  display: flex;
  flex: 1;
  min-height: 0;
  margin-right: 10px;
}

.gallery {
  display: grid;
  flex: 1;
  grid-template-columns: repeat(3, 240px);
  grid-auto-rows: 334px;
  min-width: 0;
  overflow: hidden;
}

.defs {
  position: absolute;
  width: 0;
  height: 0;
}

.card h3 {
  margin: 0;
  padding: 2px 0 0 23px;
  font-size: 12px;
  font-weight: normal;
  line-height: 22px;
}

.thumb {
  width: 230px;
  padding: 2px 15px;
  background: #e0ffff;
}

.plan {
  display: block;
  width: 200px;
}

.plan .serif {
  font-family: "Liberation Serif", "Noto Sans CJK SC", serif;
}

.scrollbar {
  flex: 0 0 17px;
  background: #f0f0f0;
}

.scroll-up {
  display: block;
  width: 17px;
  height: 17px;
  fill: none;
  stroke: #888;
}

.scroll-thumb {
  height: 36px;
  background: #cdcdcd;
}

/* drawing area */
.workspace {
  display: flex;
  flex: 1;
  flex-direction: column;
  position: relative;
  min-width: 0;
  background: #808080;
}

.floors {
  display: flex;
  align-items: center;
  gap: 6px;
  height: 39px;
  padding: 0 5px 8px;
}

.floor {
  width: 80px;
  height: 25px;
  border-radius: 5px;
  background: #c0c0c0;
  font-size: 15px;
  line-height: 24px;
}

.floor-add {
  width: 78px;
  height: 23px;
  border-radius: 3px;
  color: #fff;
}

.paper {
  flex: 1;
  margin-left: 194px;
  padding: 33px 0 0 33px;
  background: #f8f8f8;
}

.sheet {
  height: 100%;
  background:
    linear-gradient(#777, #777) 0 0 / 19px 1px no-repeat,
    linear-gradient(#777, #777) 0 0 / 1px 19px no-repeat,
    radial-gradient(circle at 1px 1px, #ededed 1px, transparent 1px) 0 0 / 6px 6px;
}

.collapse {
  position: absolute;
  top: 401px;
  left: 0;
  width: 14px;
  height: 61px;
  background: #fff;
  clip-path: polygon(0 0, 100% 7px, 100% 54px, 0 100%);
}

.collapse svg {
  display: block;
  width: 14px;
  height: 61px;
  fill: none;
  stroke: #219080;
  stroke-width: 1.5;
}

.pan {
  position: absolute;
  fill: #999;
  stroke: #aaa;
}

.pan-up {
  top: 24px;
  right: 160px;
  width: 76px;
  height: 14px;
}

.pan-left {
  top: 488px;
  left: 179px;
  width: 14px;
  height: 76px;
}

.pointer {
  position: absolute;
  top: 50px;
  left: 875px;
  width: 170px;
  height: 115px;
  pointer-events: none;
}

.pointer-line {
  stroke: #e60000;
  stroke-width: 2.5;
}

.pointer-head {
  fill: #f00;
}
```
